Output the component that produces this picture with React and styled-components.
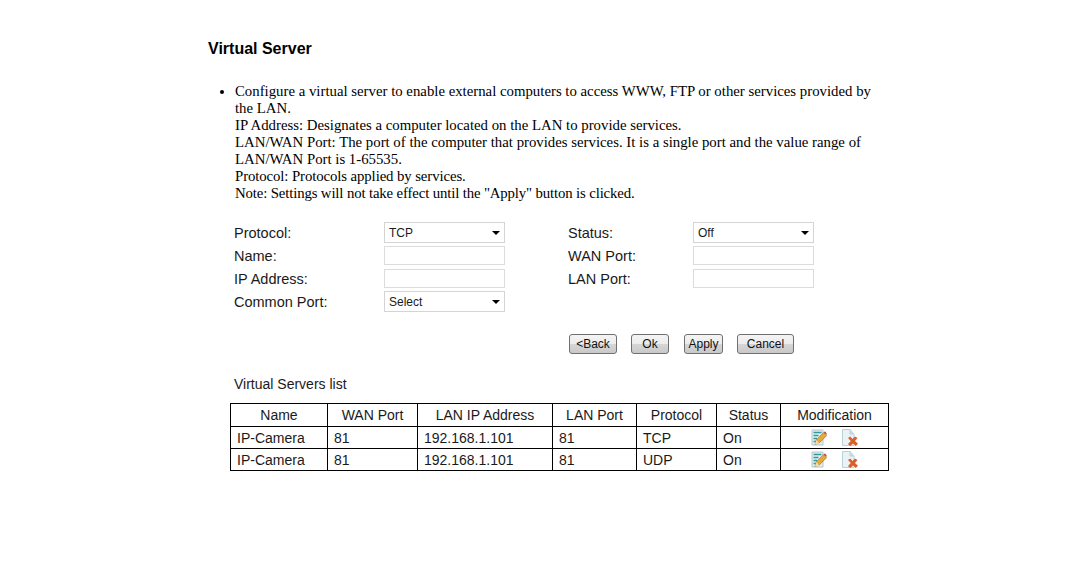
import React from 'react';
import styled, { createGlobalStyle } from 'styled-components';

const GlobalStyle = createGlobalStyle`
  html, body {
    margin: 0;
    padding: 0;
    background: #fff;
  }
`;

const Page = styled.div`
  width: 1086px;
  height: 561px;
  box-sizing: border-box;
  padding: 39px 0 0 208px;
  overflow: hidden;
  font-family: 'Liberation Sans', Arial, sans-serif;
  color: #1a1a1a;
`;

const Title = styled.h1`
  margin: 0;
  font-size: 16px;
  line-height: 19px;
  font-weight: bold;
  color: #000;
`;

const Notes = styled.ul`
  margin: 25px 0 0;
  padding: 0 0 0 27px;
  width: 650px;
  font-family: 'Liberation Serif', 'Times New Roman', serif;
  font-size: 14.8px;
  line-height: 17px;
  color: #000;
`;

const NoteLine = styled.span`
  display: block;
  letter-spacing: ${props => props.$spacing || 0}px;
`;

const Form = styled.div`
  display: grid;
  grid-template-columns: 150px 121px 63px 125px 121px;
  grid-auto-rows: 23px;
  align-items: center;
  margin: 19px 0 0 26px;
`;

const Label = styled.span`
  font-size: 14.5px;
  grid-column: ${props => props.$col};
`;

const Field = styled.div`
  grid-column: ${props => props.$col};
  box-sizing: border-box;
  width: 121px;
  height: 19px;
  border: 1px solid #dcdcdc;
  background: #fff;
`;

const SelectBox = styled(Field)`
  height: 21px;
  display: flex;
  align-items: center;
  justify-content: space-between;
  padding: 0 4px;
  font-size: 12px;
  border-color: #d4d4d4;
`;

const Caret = styled.i`
  width: 0;
  height: 0;
  border-left: 4px solid transparent;
  border-right: 4px solid transparent;
  border-top: 4px solid #000;
`;

const ButtonRow = styled.div`
  display: flex;
  margin: 21px 0 0 361px;
`;

const Button = styled.button`
  box-sizing: border-box;
  width: ${props => props.$w}px;
  height: 20px;
  margin-right: ${props => props.$gap}px;
  padding: 0;
  border: 1px solid #707070;
  border-radius: 3px;
  background: linear-gradient(#f4f4f4 0%, #ececec 48%, #d6d6d6 52%, #c9c9c9 100%);
  font-family: inherit;
  font-size: 12px;
  color: #111;
`;

const ListTitle = styled.div`
  margin: 22px 0 0 26px;
  font-size: 14px;
  line-height: 17px;
`;

const Table = styled.table`
  margin: 10px 0 0 22px;
  width: 659px;
  border-collapse: collapse;
  table-layout: fixed;
  font-size: 14px;
`;

const Th = styled.th`
  height: 22px;
  padding: 0;
  border: 1px solid #000;
  font-weight: normal;
  text-align: center;
`;

const Td = styled.td`
  height: 21px;
  padding: 0 0 0 6px;
  border: 1px solid #000;
`;

const IconCell = styled(Td)`
  padding: 0;
`;

const Icons = styled.div`
  display: flex;
  justify-content: center;
  gap: 14px;
  padding-top: 1px;
`;

const EditIcon = () => (
  <svg width="16" height="17" viewBox="0 0 16 17">
    <path d="M1 1h11v15H1z" fill="#e4eef0" stroke="#b4c6ca" />
    <path d="M2.500 3.500h8M2.500 6.500h5M2.500 9.500h3.500M2.500 12.500h2.500" stroke="#2f9a9c" strokeWidth="1.500" />
    <path d="M4 15.500l1.200-4.500 7.300-7.300 3 3-7.300 7.300z" fill="#e8a93c" stroke="#a87028" strokeWidth=".7" />
    <path d="M4 15.500l1.200-4.500 3.300 3.500z" fill="#f3dcae" />
    <path d="M12.500 3.700l1.500-1.500 2 2.800-.5.700z" fill="#b9503a" />
  </svg>
);

const DeleteIcon = () => (
  <svg width="18" height="18" viewBox="0 0 18 18">
    <path d="M1.500 .5h7.500l4 4.500v11.500h-11.500z" fill="#e9f3f6" stroke="#bcd0d8" />
    <path d="M9 .5v4.500h4" fill="#c7dce4" stroke="#bcd0d8" />
    <path d="M7 9l2.200-1.500 2.300 2.500 2.500-2.500 2.500 1.500-2.500 3 3 2.800-2.200 2.200-2.800-2.500-2.800 2.500-2.200-2 2.800-3z" fill="#d8602c" />
  </svg>
);

const ROWS = [
  ['IP-Camera', '81', '192.168.1.101', '81', 'TCP', 'On'],
  ['IP-Camera', '81', '192.168.1.101', '81', 'UDP', 'On']
];
const HEADS = [
  ['Name', 97],
  ['WAN Port', 90],
  ['LAN IP Address', 135],
  ['LAN Port', 84],
  ['Protocol', 80],
  ['Status', 64],
  ['Modification', 108]
];

const App = () => (
  <Page>
    <GlobalStyle />
    <Title>Virtual Server</Title>
    <Notes>
      <li>
        <NoteLine>
          Configure a virtual server to enable external computers to access WWW, FTP or other services provided by the LAN.
        </NoteLine>
        <NoteLine>IP Address: Designates a computer located on the LAN to provide services.</NoteLine>
        <NoteLine>
          LAN/WAN Port: The port of the computer that provides services. It is a single port and the value range of LAN/WAN Port is 1-65535.
        </NoteLine>
        <NoteLine $spacing={-0.1}>Protocol: Protocols applied by services.</NoteLine>
        <NoteLine $spacing={-0.14}>Note: Settings will not take effect until the "Apply" button is clicked.</NoteLine>
      </li>
    </Notes>
    <Form>
      <Label $col={1}>Protocol:</Label>
      <SelectBox $col={2}>TCP<Caret /></SelectBox>
      <Label $col={4}>Status:</Label>
      <SelectBox $col={5}>Off<Caret /></SelectBox>
      <Label $col={1}>Name:</Label>
      <Field $col={2} />
      <Label $col={4}>WAN Port:</Label>
      <Field $col={5} />
      <Label $col={1}>IP Address:</Label>
      <Field $col={2} />
      <Label $col={4}>LAN Port:</Label>
      <Field $col={5} />
      <Label $col={1}>Common Port:</Label>
      <SelectBox $col={2}>Select<Caret /></SelectBox>
    </Form>
    <ButtonRow>
      <Button $w={48} $gap={14}>&lt;Back</Button>
      <Button $w={38} $gap={15}>Ok</Button>
      <Button $w={39} $gap={14}>Apply</Button>
      <Button $w={57} $gap={0}>Cancel</Button>
    </ButtonRow>
    <ListTitle>Virtual Servers list</ListTitle>
    <Table>
      <colgroup>
        {HEADS.map(([name, w]) => <col key={name} width={w} />)}
      </colgroup>
      <thead>
        <tr>{HEADS.map(([name]) => <Th key={name}>{name}</Th>)}</tr>
      </thead>
      <tbody>
        {ROWS.map(row => (
          <tr key={row[4]}>
            {row.map((cell, i) => <Td key={i}>{cell}</Td>)}
            <IconCell>
              <Icons>
                <EditIcon />
                <DeleteIcon />
              </Icons>
            </IconCell>
          </tr>
        ))}
      </tbody>
    </Table>
  </Page>
);

export default App;
